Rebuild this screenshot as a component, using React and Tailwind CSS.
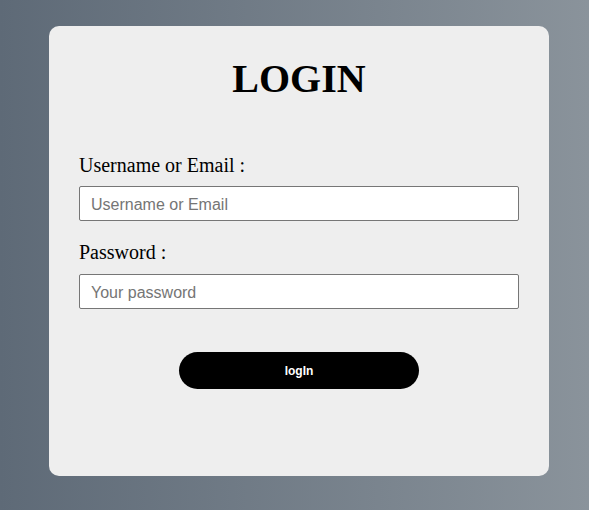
const App = () => {
  return (
    <div className="min-h-[510px] w-full bg-linear-to-r from-[#5e6a77] to-[#8a939b] pt-[26px] pl-[49px] pb-[34px]">
      {/* Card */}
      <div className="w-[500px] h-[450px] bg-[#eeeeee] rounded-[10px] px-[30px] pt-[30px] font-['Liberation_Serif',serif] text-black">
        <h1 className="text-[40px] leading-[46px] font-bold text-center">LOGIN</h1>

        <form className="mt-[52px] flex flex-col" onSubmit={(e) => e.preventDefault()}>
          <label className="text-[20px] leading-[23px]">Username or Email :</label>
          <input
            type="text"
            placeholder="Username or Email"
            className="mt-[9px] h-[35px] w-[440px] bg-white border border-[#767676] rounded-[2px] px-[11px] pt-[2px] text-[16px] font-['Liberation_Sans',Arial,sans-serif] placeholder:text-[#757575] outline-none"
          />

          <label className="mt-[20px] text-[20px] leading-[23px]">Password :</label>
          <input
            type="password"
            placeholder="Your password"
            className="mt-[10px] h-[35px] w-[440px] bg-white border border-[#767676] rounded-[2px] px-[11px] pt-[2px] text-[16px] font-['Liberation_Sans',Arial,sans-serif] placeholder:text-[#757575] outline-none"
          />

          <button
            type="submit"
            className="mt-[43px] self-center w-[240px] h-[37px] rounded-full bg-black text-white text-[12px] font-bold font-['Liberation_Sans',Arial,sans-serif]"
          >
            logIn
          </button>
        </form>
      </div>
    </div>
  );
};

export default App;
